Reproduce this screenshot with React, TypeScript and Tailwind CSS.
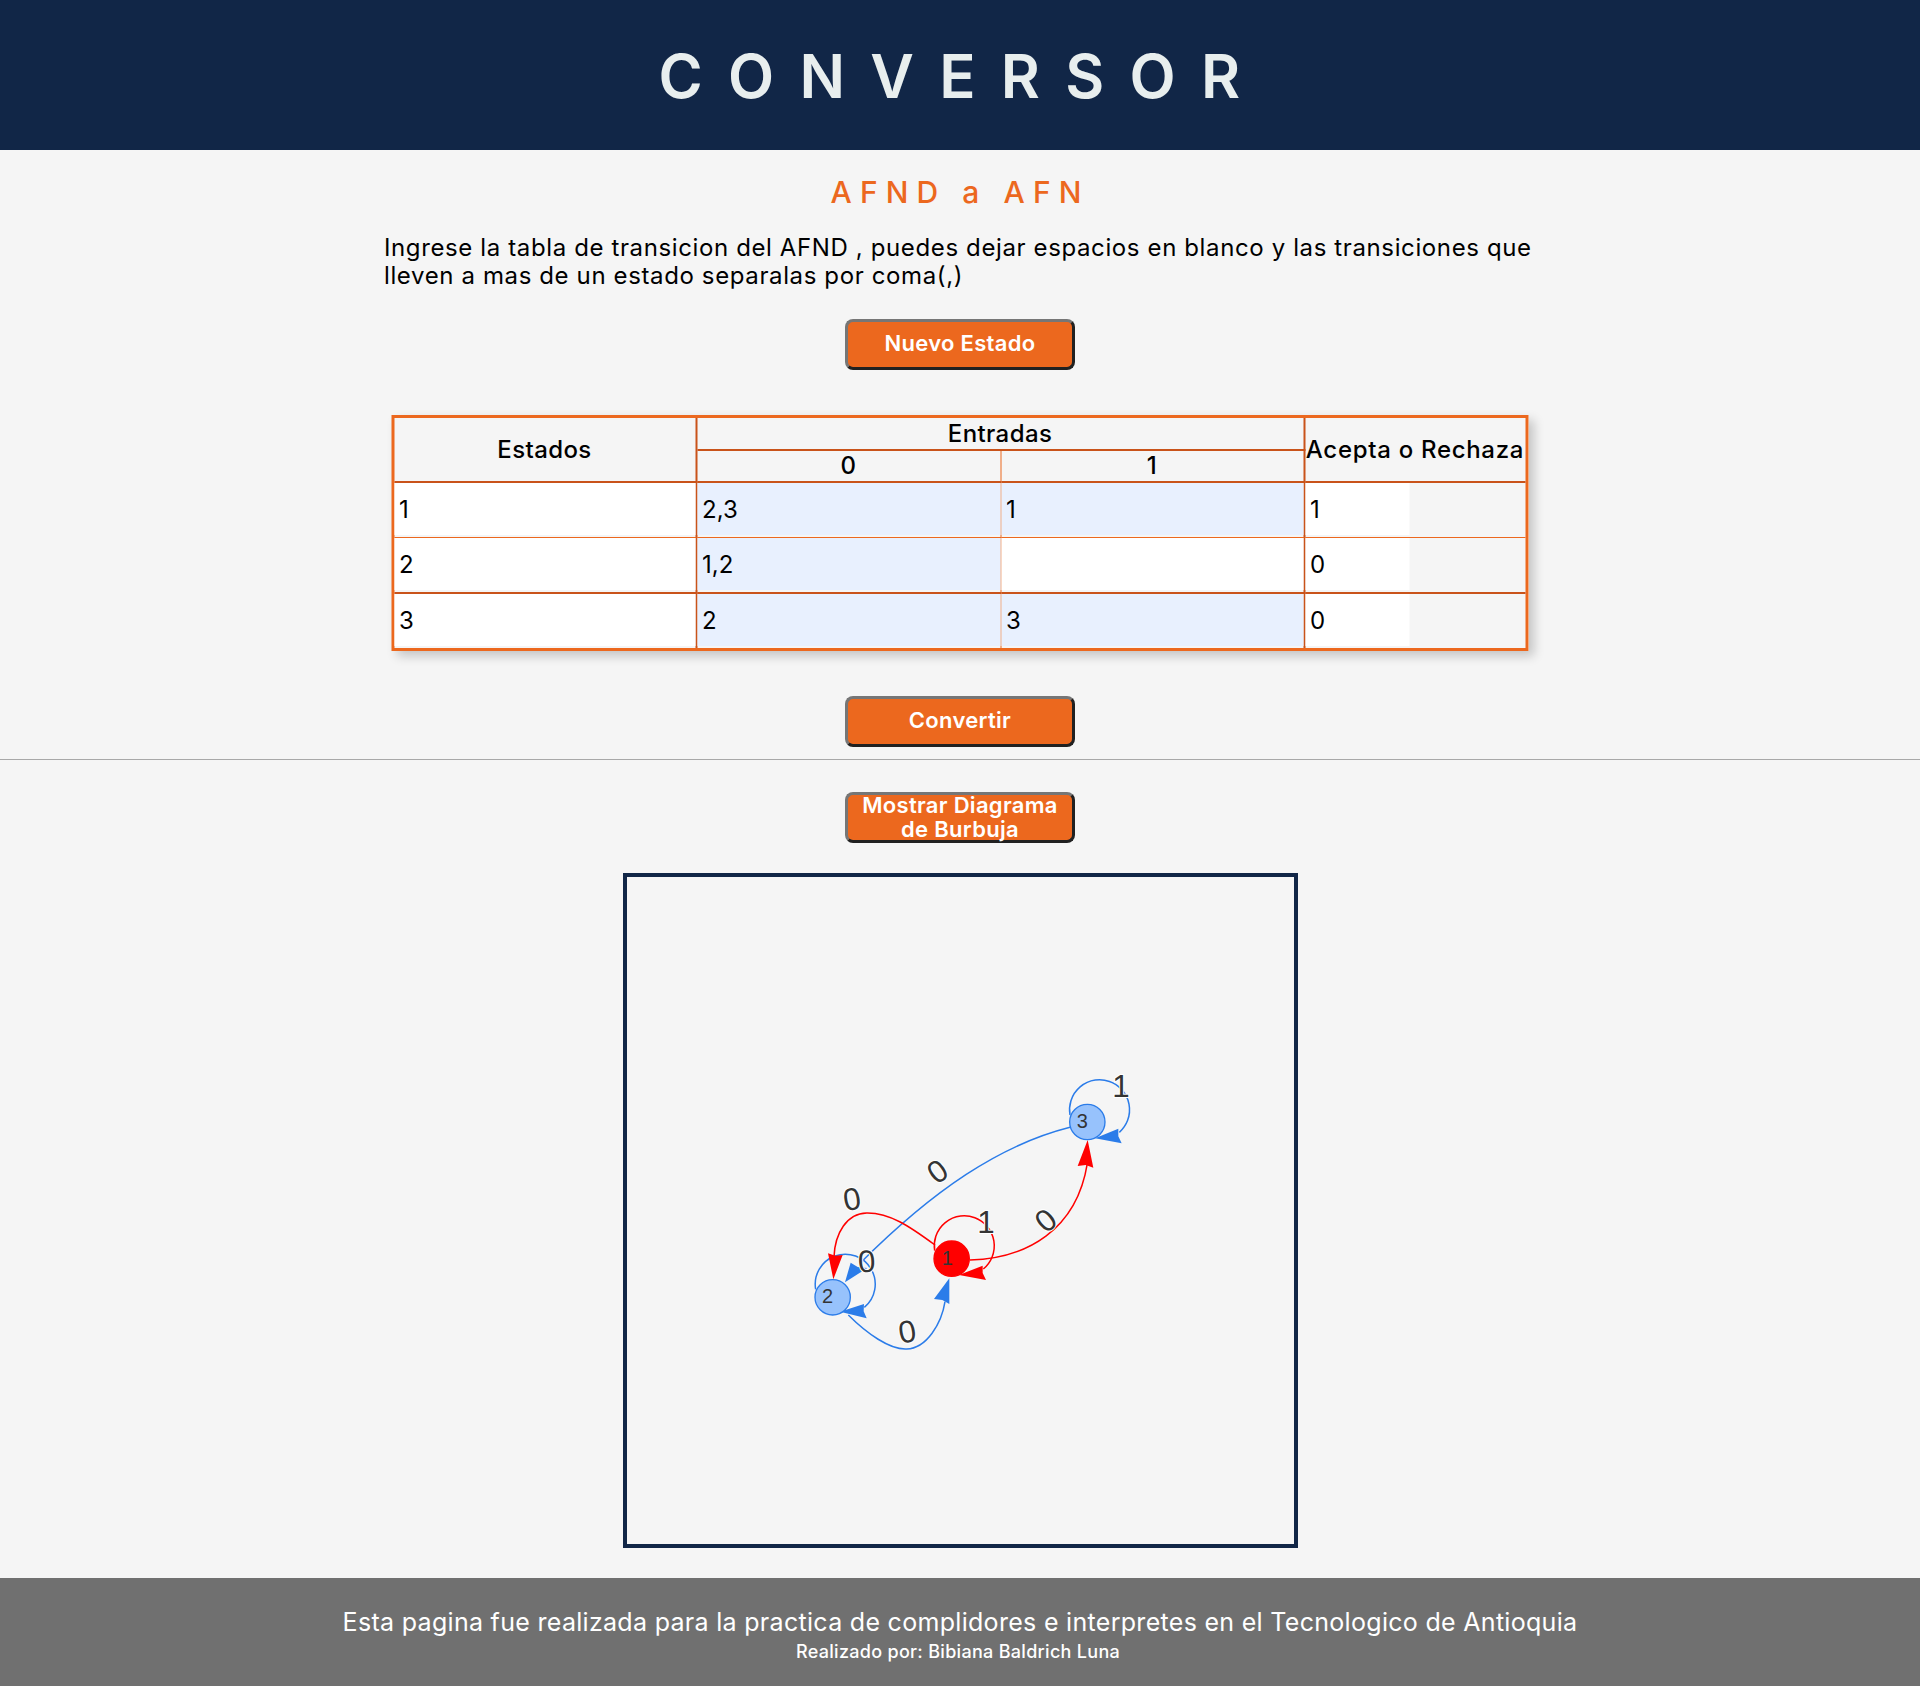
import React from 'react';

const poppins = "font-['Inter','Noto_Sans',sans-serif]";

const btn =
  "block w-[230px] h-[51px] mx-auto px-3 pb-[3px] rounded-lg border-[3px] border-t-[#767676] border-l-[#767676] border-b-[#212121] border-r-[#212121] bg-[#ec681e] text-white text-[22px] leading-[24px] font-semibold font-['Inter',sans-serif] tracking-[0.3px]";

const rows = [
  { id: '1', a: '2,3', b: '1', c: '1' },
  { id: '2', a: '1,2', b: '', c: '0' },
  { id: '3', a: '2', b: '3', c: '0' },
];

function Cell({ value, tint, narrow }: { value: string; tint?: boolean; narrow?: boolean }) {
  return (
    <input
      readOnly
      defaultValue={value}
      className={`${tint && value ? 'bg-[#e8f0fe]' : 'bg-white'} ${narrow ? 'w-[104px]' : 'w-full'} block h-[52px] pl-[5px] text-[24px] text-black outline-none ${poppins}`}
    />
  );
}

function Arrow({ points, color }: { points: string; color: string }) {
  return <polygon points={points} fill={color} />;
}

function Label({ x, y, r, children }: { x: number; y: number; r: number; children: string }) {
  return (
    <text
      x={x}
      y={y}
      transform={`rotate(${r} ${x} ${y})`}
      textAnchor="middle"
      dominantBaseline="central"
      fontSize={94}
      fontFamily="'Liberation Sans', sans-serif"
      fill="#343434"
      stroke="#ffffff"
      strokeWidth={6}
      paintOrder="stroke"
    >
      {children}
    </text>
  );
}

function Node({ cx, cy, lx, ly, fill, border, children }: { cx: number; cy: number; lx: number; ly: number; fill: string; border: string; children: string }) {
  return (
    <>
      <circle cx={cx} cy={cy} r={53} fill={fill} stroke={border} strokeWidth={4} />
      <text x={lx} y={ly} textAnchor="middle" dominantBaseline="central" fontSize={60} fontFamily="'Liberation Sans', sans-serif" fill="#343434">
        {children}
      </text>
    </>
  );
}

function Diagram() {
  const blue = '#2b7ce9';
  const red = '#ff0000';
  return (
    <svg viewBox="627 877 667 667" className="block w-full h-full">
      <g transform="translate(760 1040) scale(0.33333)" fill="none" strokeWidth={4.5}>
        {/* edges */}
        <path d="M930 262 C720 315 520 450 300 670" stroke={blue} />
        <path d="M265 825 C320 880 390 930 440 927 C500 925 545 850 555 785" stroke={blue} />
        <path d="M930 225 A90 90 0 1 1 1078 277" stroke={blue} />
        <path d="M167 748 A90 90 0 1 1 313 802" stroke={blue} />
        <path d="M525 615 C450 560 390 518 320 519 C260 520 225 580 222 650" stroke={red} />
        <path d="M630 660 C800 655 950 570 982 370" stroke={red} />
        <path d="M524 632 A90 90 0 1 1 670 687" stroke={red} />

        <Arrow color={blue} points="255,727 272,668 293,681 322,684" />
        <Arrow color={blue} points="568,715 522,777 547,780 568,792" />
        <Arrow color={blue} points="1005,295 1075,266 1075,289 1085,310" />
        <Arrow color={blue} points="240,815 312,792 311,814 320,835" />
        <Arrow color={red} points="220,718 204,640 226,647 248,645" />
        <Arrow color={red} points="983,300 953,378 977,375 1000,383" />
        <Arrow color={red} points="597,705 668,677 668,699 678,720" />

        <Label x={533} y={395} r={-35}>0</Label>
        <Label x={276} y={478} r={-10}>0</Label>
        <Label x={320} y={665} r={-3}>0</Label>
        <Label x={858} y={542} r={-40}>0</Label>
        <Label x={442} y={876} r={-10}>0</Label>
        <Label x={1083} y={140} r={0}>1</Label>
        <Label x={678} y={548} r={0}>1</Label>

        <Node cx={575} cy={656} lx={562} ly={655} fill={red} border={red}>1</Node>
        <Node cx={218} cy={772} lx={203} ly={768} fill="#97c2fc" border={blue}>2</Node>
        <Node cx={982} cy={246} lx={967} ly={243} fill="#97c2fc" border={blue}>3</Node>
      </g>
    </svg>
  );
}

export default function App() {
  return (
    <div className={`min-h-[1686px] flex flex-col bg-[#f5f5f5] text-black ${poppins}`}>
      <header className="h-[150px] pt-[2px] pl-[4px] flex items-center justify-center bg-[#112647]">
        <h1 className="text-[60px] leading-none font-semibold tracking-[25.3px] text-[#e8eeee] font-['Inter',sans-serif]">CONVERSOR</h1>
      </header>

      <main className="flex-1">
        <h2 className="mt-[23px] text-center text-[30px] leading-[38px] font-medium tracking-[0.27em] text-[#ec681e]">AFND a AFN</h2>

        <p className="mt-[23px] mx-auto w-[1152px] text-[24px] leading-[28px] tracking-[0.62px]">
          Ingrese la tabla de transicion del AFND , puedes dejar espacios en blanco y las transiciones que lleven a mas de un estado separalas por coma(,)
        </p>

        <button className={`${btn} mt-[29px]`}>Nuevo Estado</button>

        <div className="mt-[45px] mx-auto w-[1137px] translate-x-[-0.5px]">
          <table className="w-full table-fixed border-separate border-spacing-0 border-[3px] border-[#ec681e] shadow-[5px_5px_10px_rgba(0,0,0,0.2)]">
            <colgroup>
              <col className="w-[303px]" />
              <col className="w-[304px]" />
              <col className="w-[304px]" />
              <col />
            </colgroup>
            <thead className="text-[24px] tracking-[0.4px]">
              <tr>
                <th rowSpan={2} className="border-r-2 border-b-2 border-[#c9531a] font-medium">Estados</th>
                <th colSpan={2} className="h-[33px] leading-[30px] border-r-2 border-b-2 border-[#c9531a] font-medium">Entradas</th>
                <th rowSpan={2} className="p-0 whitespace-nowrap border-b-2 border-[#c9531a] font-medium tracking-[0.7px]">Acepta o Rechaza</th>
              </tr>
              <tr>
                <th className="h-[32px] leading-[30px] border-r border-b-2 border-r-[#ec681e] border-b-[#c9531a] font-medium">0</th>
                <th className="h-[32px] leading-[30px] border-r-2 border-b-2 border-[#c9531a] font-medium">1</th>
              </tr>
            </thead>
            <tbody>
              {rows.map((r, i) => {
                const line = i === 0 ? 'border-b border-b-[#ec681e]' : i === 1 ? 'border-b-2 border-b-[#c9531a]' : '';
                return (
                  <tr key={r.id}>
                    <td className={`p-0 pb-[2px] border-r-2 border-r-[#c9531a] ${line}`}>
                      <Cell value={r.id} />
                    </td>
                    <td className={`p-0 pb-[2px] border-r border-r-[#ec681e] ${line}`}>
                      <Cell value={r.a} tint />
                    </td>
                    <td className={`p-0 pb-[2px] border-r-2 border-r-[#c9531a] ${line}`}>
                      <Cell value={r.b} tint />
                    </td>
                    <td className={`p-0 pb-[2px] ${line}`}>
                      <Cell value={r.c} narrow />
                    </td>
                  </tr>
                );
              })}
            </tbody>
          </table>
        </div>

        <button className={`${btn} mt-[45px]`}>Convertir</button>

        <hr className="mt-[12px] border-t border-[#a8a8a8]" />

        <button className={`${btn} mt-[32px]`}>
          <span className="block -mt-[2px]">Mostrar Diagrama de Burbuja</span>
        </button>

        <div className="mt-[30px] mx-auto w-[675px] h-[675px] border-4 border-[#112647]">
          <Diagram />
        </div>
      </main>

      <footer className="h-[108px] pt-[28px] bg-[#707070] text-center text-white">
        <p className="text-[25px] leading-[32px] tracking-[0.3px]">Esta pagina fue realizada para la practica de complidores e interpretes en el Tecnologico de Antioquia</p>
        <p className="mt-[2px] pr-[4px] text-[18px] leading-[24px] font-medium tracking-[0.3px]">Realizado por: Bibiana Baldrich Luna</p>
      </footer>
    </div>
  );
}
